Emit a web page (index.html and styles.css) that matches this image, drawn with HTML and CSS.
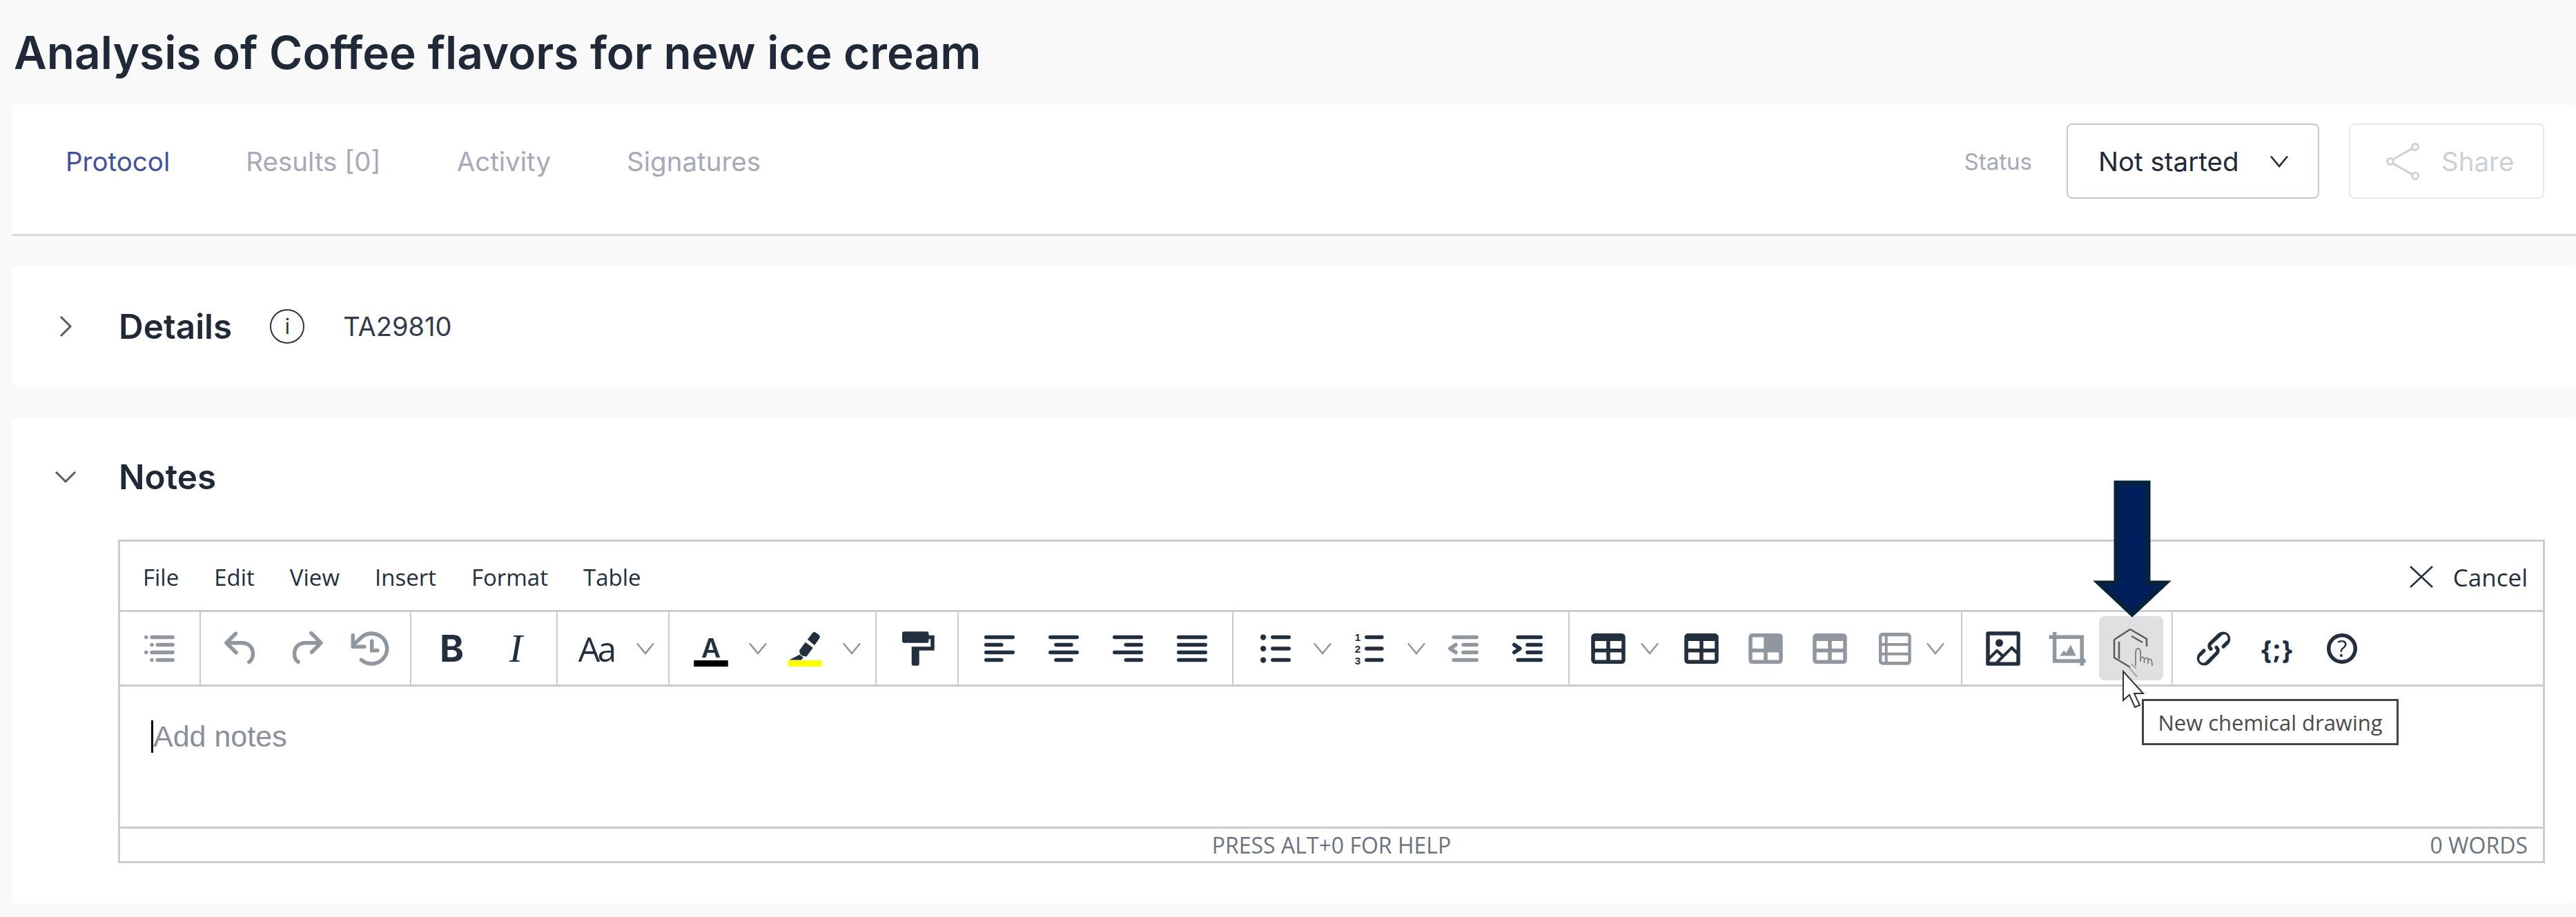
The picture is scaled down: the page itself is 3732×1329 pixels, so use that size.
FILE: index.html
```html
<!doctype html>
<html lang="en">
  <head>
    <meta charset="UTF-8" />
    <title>Analysis of Coffee flavors for new ice cream</title>
    <link rel="stylesheet" href="styles.css">
  </head>
  <body>
    <svg class="sprite">
      <symbol id="chev" viewBox="0 0 28 18"><path d="M2 1.500 14 16 26 1.500" fill="none" stroke="currentColor" stroke-width="2.600"/></symbol>
      <symbol id="table" viewBox="0 0 24 24"><path fill-rule="evenodd" d="M19 4a2 2 0 0 1 2 2v12a2 2 0 0 1-2 2H5a2 2 0 0 1-2-2V6c0-1.1.9-2 2-2h14ZM5 14v4h6v-4H5Zm14 0h-6v4h6v-4Zm0-6h-6v4h6V8ZM5 12h6V8H5v4Z"/></symbol>
    </svg>

    <h1 class="page-title">Analysis of Coffee flavors for new ice cream</h1>

    <div class="card tabs-card">
      <div class="tabs">
        <a class="tab active">Protocol</a>
        <a class="tab">Results [0]</a>
        <a class="tab">Activity</a>
        <a class="tab">Signatures</a>
      </div>
      <div class="tabs-right">
        <span class="status-label">Status</span>
        <div class="select">
          <span>Not started</span>
          <svg class="select-chev"><use href="#chev"/></svg>
        </div>
        <div class="share-btn">
          <svg class="share-icon" viewBox="0 0 50 54" fill="none" stroke="currentColor" stroke-width="3">
            <circle cx="6" cy="27" r="4.500"/><circle cx="42" cy="6" r="4.500"/><circle cx="42" cy="48" r="4.500"/>
            <path d="M10 24 38 8M10 30l28 16"/>
          </svg>
          <span>Share</span>
        </div>
      </div>
    </div>

    <div class="card details-card">
      <svg class="section-chev" viewBox="0 0 20 34"><path d="M3 3 17 17 3 31" fill="none" stroke="currentColor" stroke-width="3"/></svg>
      <span class="section-title">Details</span>
      <span class="info-icon">i</span>
      <span class="details-id">TA29810</span>
    </div>

    <div class="card notes-card">
      <div class="notes-head">
        <svg class="section-chev-down" viewBox="0 0 34 20"><path d="M3 3 17 17 31 3" fill="none" stroke="currentColor" stroke-width="3"/></svg>
        <span class="section-title">Notes</span>
      </div>

      <div class="editor">
        <div class="menubar">
          <span>File</span>
          <span>Edit</span>
          <span>View</span>
          <span>Insert</span>
          <span>Format</span>
          <span>Table</span>
          <div class="cancel">
            <svg class="cancel-x" viewBox="0 0 36 34"><path d="M2 2 34 32M34 2 2 32" fill="none" stroke="currentColor" stroke-width="2.500"/></svg>
            <span>Cancel</span>
          </div>
        </div>

        <div class="toolbar">
          <div class="group">
            <button class="btn off"><svg class="ico" viewBox="0 0 24 24"><path d="M5 5c.6 0 1 .4 1 1s-.4 1-1 1a1 1 0 1 1 0-2Zm3 0h11c.6 0 1 .4 1 1s-.4 1-1 1H8a1 1 0 1 1 0-2Zm-3 8c.6 0 1 .4 1 1s-.4 1-1 1a1 1 0 0 1 0-2Zm3 0h11c.6 0 1 .4 1 1s-.4 1-1 1H8a1 1 0 0 1 0-2Zm0-4c.6 0 1 .4 1 1s-.4 1-1 1a1 1 0 1 1 0-2Zm3 0h8c.6 0 1 .4 1 1s-.4 1-1 1h-8a1 1 0 0 1 0-2Zm-3 8c.6 0 1 .4 1 1s-.4 1-1 1a1 1 0 0 1 0-2Zm3 0h8c.6 0 1 .4 1 1s-.4 1-1 1h-8a1 1 0 0 1 0-2Z"/></svg></button>
          </div>

          <div class="group">
            <button class="btn off"><svg class="ico" viewBox="0 0 24 24"><path d="M6.4 8H12c3.7 0 6.2 2 6.8 5.1.6 2.7-.4 5.6-2.3 6.8a1 1 0 0 1-1-1.8c1.1-.6 1.8-2.7 1.4-4.6-.5-2.1-2.1-3.5-4.9-3.5H6.4l3.3 3.3a1 1 0 1 1-1.4 1.4l-5-5a1 1 0 0 1 0-1.4l5-5a1 1 0 0 1 1.4 1.4L6.4 8Z"/></svg></button>
            <button class="btn off"><svg class="ico" viewBox="0 0 24 24"><path d="M17.6 10H12c-2.8 0-4.4 1.4-4.9 3.5-.4 2 .3 4 1.4 4.6a1 1 0 1 1-1 1.8c-2-1.2-2.9-4.1-2.3-6.8.6-3 3-5.1 6.8-5.1h5.6l-3.3-3.3a1 1 0 1 1 1.4-1.4l5 5a1 1 0 0 1 0 1.4l-5 5a1 1 0 0 1-1.4-1.4l3.3-3.3Z"/></svg></button>
            <button class="btn off"><svg class="ico" viewBox="0 0 24 24"><path d="M17 13c0 .6-.4 1-1 1h-4V8c0-.6.4-1 1-1s1 .4 1 1v4h2c.6 0 1 .4 1 1Z"/><path d="M4.7 10H9a1 1 0 0 1 0 2H3a1 1 0 0 1-1-1V5a1 1 0 1 1 2 0v3l2.5-2.4a9.2 9.2 0 0 1 10.8-1.5A9 9 0 0 1 13.4 21c-2.4.1-4.7-.7-6.5-2.2a1 1 0 1 1 1.3-1.5 7.2 7.2 0 0 0 11.6-3.7 7 7 0 0 0-3.5-7.7A7.2 7.2 0 0 0 8 7L4.7 10Z"/></svg></button>
          </div>

          <div class="group">
            <button class="btn glyph-b">B</button>
            <button class="btn glyph-i">I</button>
          </div>

          <div class="group">
            <button class="btn glyph-aa">Aa</button>
            <span class="caret"><svg><use href="#chev"/></svg></span>
          </div>

          <div class="group">
            <button class="btn">
              <svg class="ico" viewBox="0 0 24 24">
                <text class="glyph-a" x="12" y="16.600" text-anchor="middle">A</text>
                <rect x="3" y="18.200" width="18" height="3.300" fill="#000"/>
              </svg>
            </button>
            <span class="caret"><svg><use href="#chev"/></svg></span>
            <button class="btn">
              <svg class="ico" viewBox="0 0 24 24">
                <path d="M13.400 7.200 16 3.800q.8-.9 1.800-.3l1.600 1.200q.9.8.3 1.800l-2.600 3.800ZM12.300 8.600l4 2.900-3.400 4.700-2-.3-1.400-1-.4-1.900ZM9.200 15.200l2 1.400-1 1.400H3.800Z"/>
                <rect x="3" y="18.200" width="18" height="3.300" fill="#ff0"/>
              </svg>
            </button>
            <span class="caret"><svg><use href="#chev"/></svg></span>
          </div>

          <div class="group">
            <button class="btn"><svg class="ico" viewBox="0 0 24 24"><path d="M18 5V4c0-.5-.4-1-1-1H5a1 1 0 0 0-1 1v4c0 .6.5 1 1 1h12c.6 0 1-.4 1-1V7h1v4H9v9c0 .6.4 1 1 1h2c.6 0 1-.4 1-1v-7h8V5h-3Z"/></svg></button>
          </div>

          <div class="group">
            <button class="btn"><svg class="ico" viewBox="0 0 24 24"><rect x="4" y="5" width="16" height="2" rx="1"/><rect x="4" y="9" width="10" height="2" rx="1"/><rect x="4" y="13" width="16" height="2" rx="1"/><rect x="4" y="17" width="10" height="2" rx="1"/></svg></button>
            <button class="btn"><svg class="ico" viewBox="0 0 24 24"><rect x="4" y="5" width="16" height="2" rx="1"/><rect x="7" y="9" width="10" height="2" rx="1"/><rect x="4" y="13" width="16" height="2" rx="1"/><rect x="7" y="17" width="10" height="2" rx="1"/></svg></button>
            <button class="btn"><svg class="ico" viewBox="0 0 24 24"><rect x="4" y="5" width="16" height="2" rx="1"/><rect x="10" y="9" width="10" height="2" rx="1"/><rect x="4" y="13" width="16" height="2" rx="1"/><rect x="10" y="17" width="10" height="2" rx="1"/></svg></button>
            <button class="btn"><svg class="ico" viewBox="0 0 24 24"><rect x="4" y="5" width="16" height="2" rx="1"/><rect x="4" y="9" width="16" height="2" rx="1"/><rect x="4" y="13" width="16" height="2" rx="1"/><rect x="4" y="17" width="16" height="2" rx="1"/></svg></button>
          </div>

          <div class="group">
            <button class="btn"><svg class="ico" viewBox="0 0 24 24"><circle cx="5.500" cy="6" r="1.500"/><circle cx="5.500" cy="12" r="1.500"/><circle cx="5.500" cy="18" r="1.500"/><rect x="9.500" y="5" width="10.500" height="2" rx="1"/><rect x="9.500" y="11" width="10.500" height="2" rx="1"/><rect x="9.500" y="17" width="10.500" height="2" rx="1"/></svg></button>
            <span class="caret"><svg><use href="#chev"/></svg></span>
            <button class="btn"><svg class="ico" viewBox="0 0 24 24"><text class="glyph-num" x="5.800" y="8">1</text><text class="glyph-num" x="5.800" y="14.200">2</text><text class="glyph-num" x="5.800" y="20.400">3</text><rect x="9.500" y="5" width="10" height="2" rx="1"/><rect x="9.500" y="11" width="10" height="2" rx="1"/><rect x="9.500" y="17" width="10" height="2" rx="1"/></svg></button>
            <span class="caret"><svg><use href="#chev"/></svg></span>
            <button class="btn off"><svg class="ico" viewBox="0 0 24 24"><path d="M7 5h12c.6 0 1 .4 1 1s-.4 1-1 1H7a1 1 0 1 1 0-2Zm5 4h7c.6 0 1 .4 1 1s-.4 1-1 1h-7a1 1 0 0 1 0-2Zm0 4h7c.6 0 1 .4 1 1s-.4 1-1 1h-7a1 1 0 0 1 0-2Zm-5 4h12a1 1 0 0 1 0 2H7a1 1 0 0 1 0-2Zm1.6-3.8a1 1 0 0 1-1.2 1.6l-3-2a1 1 0 0 1 0-1.6l3-2a1 1 0 0 1 1.2 1.6L6.8 12l1.8 1.2Z"/></svg></button>
            <button class="btn"><svg class="ico" viewBox="0 0 24 24"><path d="M7 5h12c.6 0 1 .4 1 1s-.4 1-1 1H7a1 1 0 1 1 0-2Zm5 4h7c.6 0 1 .4 1 1s-.4 1-1 1h-7a1 1 0 0 1 0-2Zm0 4h7c.6 0 1 .4 1 1s-.4 1-1 1h-7a1 1 0 0 1 0-2Zm-5 4h12a1 1 0 0 1 0 2H7a1 1 0 0 1 0-2Zm-2.6-3.8L6.2 12l-1.8-1.2a1 1 0 0 1 1.2-1.6l3 2a1 1 0 0 1 0 1.6l-3 2a1 1 0 1 1-1.2-1.6Z"/></svg></button>
          </div>

          <div class="group">
            <button class="btn"><svg class="ico"><use href="#table"/></svg></button>
            <span class="caret caret-tight"><svg><use href="#chev"/></svg></span>
            <button class="btn"><svg class="ico"><use href="#table"/></svg></button>
            <button class="btn off"><svg class="ico" viewBox="0 0 24 24"><path fill-rule="evenodd" d="M19 4a2 2 0 0 1 2 2v12a2 2 0 0 1-2 2H5a2 2 0 0 1-2-2V6c0-1.1.9-2 2-2h14ZM5 14v4h6v-4H5Zm14 0h-6v4h6v-4ZM11 6H5v6h6V6Z"/></svg></button>
            <button class="btn off"><svg class="ico"><use href="#table"/></svg></button>
            <button class="btn off"><svg class="ico" viewBox="0 0 24 24"><path fill-rule="evenodd" d="M19 3.600a2 2 0 0 1 2 2v13a2 2 0 0 1-2 2H6a2 2 0 0 1-2-2v-13c0-1.100.9-2 2-2h13ZM5.600 15.500v3.400h1.600v-3.400H5.600Zm3 0v3.400h10.800v-3.400H8.600Zm0-5v3.600h10.800v-3.600H8.600Zm-3 0v3.600h1.600v-3.600H5.600Zm3-5v3.600h10.800V5.500H8.600Zm-3 0v3.600h1.600V5.500H5.600Z"/></svg></button>
            <span class="caret caret-tight"><svg><use href="#chev"/></svg></span>
          </div>

          <div class="group">
            <button class="btn"><svg class="ico" viewBox="0 0 24 24"><path fill-rule="evenodd" d="m5 15.7 3.3-3.2c.3-.3.7-.3 1 0L12 15l4.1-4c.3-.4.8-.4 1 0l2 1.9V5H5v10.7ZM5 18v1h3l2.8-2.9-2-2L5 17.9Zm14-3-2.5-2.4-6.4 6.5H19v-4ZM4 3h16c.6 0 1 .4 1 1v16c0 .6-.4 1-1 1H4a1 1 0 0 1-1-1V4c0-.6.4-1 1-1Zm6 8a2 2 0 1 0 0-4 2 2 0 0 0 0 4Z"/></svg></button>
            <button class="btn off">
              <svg class="ico" viewBox="0 0 24 24">
                <path d="M5.300 3.300V18.500H21.700M2.400 5.900H19.700V21" fill="none" stroke="currentColor" stroke-width="2"/>
                <path d="M8 15.800 10.200 13l1.200 1.200 2.400-4.200 2.800 5.800Z"/>
              </svg>
            </button>
            <button class="btn hover">
              <svg class="chem" viewBox="0 0 93 93" fill="none">
                <path d="M45 19 69 33V44M22 34V60L45 74M22 34 45 19M47 29 63 38M29 37V62" stroke="#5c5c5c" stroke-width="2.500"/>
                <path d="M53 72V53q0-6 3.500-6T60 53V66M60 61q3-3 5.500 0V68M65.500 62q3-2.500 5.500 0V69M71 63q3-2 5 1 1 5 1 8" stroke="#858585" stroke-width="2"/>
                <path d="M47 69 54 76M44 75 55 88" stroke="#a5a5a5" stroke-width="2"/>
              </svg>
            </button>
          </div>

          <div class="group">
            <button class="btn"><svg class="ico" viewBox="0 0 24 24"><path d="M6.2 12.3a1 1 0 0 1 1.4 1.4l-2 2a2 2 0 1 0 2.6 2.8l4.8-4.8a1 1 0 0 0 0-1.4 1 1 0 1 1 1.400-1.300 2.900 2.900 0 0 1 0 4L9.600 20a3.900 3.900 0 0 1-5.500-5.500l2-2Zm11.600-.6a1 1 0 0 1-1.400-1.400l2-2a2 2 0 1 0-2.600-2.800L11 9.900a1 1 0 0 0 0 1.400 1 1 0 1 1-1.400 1.300 2.900 2.900 0 0 1 0-4L14.400 4a3.900 3.900 0 0 1 5.500 5.500l-2 2Z"/></svg></button>
            <button class="btn glyph-code">{;}</button>
            <button class="btn">
              <svg class="ico" viewBox="0 0 24 24">
                <circle cx="12" cy="12" r="7" fill="none" stroke="currentColor" stroke-width="2"/>
                <text class="glyph-help" x="12" y="16.200" text-anchor="middle">?</text>
              </svg>
            </button>
          </div>
        </div>

        <div class="edit-area">
          <span class="caret-line"></span><span class="placeholder">Add notes</span>
        </div>

        <div class="statusbar">
          <span></span>
          <span class="help-hint">PRESS ALT+0 FOR HELP</span>
          <span class="word-count">0 WORDS</span>
        </div>
      </div>
    </div>

    <svg class="big-arrow" viewBox="0 0 118 210"><path d="M36 6H82V151H107L59 196 11 151H36Z" fill="#001f5c" stroke="#05233a" stroke-width="7" stroke-miterlimit="10"/></svg>
    <svg class="mouse" viewBox="0 0 34 58"><path d="M2 2V44L11 36 19 54 26 51 18 34H31Z" fill="#fff" stroke="#333" stroke-width="2"/></svg>
    <div class="tooltip">New chemical drawing</div>
  </body>
</html>
```

FILE: styles.css
```css
* {
  box-sizing: border-box;
}
body {
  font-family: "Inter", "Liberation Sans", sans-serif;
  margin: 0;
  padding-left: 18px;
  background-color: #f9f9f9;
  color: #222f3e;
  height: 1329px;
  overflow: hidden;
}
.sprite {
  display: none;
}
.page-title {
  margin: 0;
  height: 151px;
  padding: 37px 0 0 2px;
  font-size: 65.700px;
  line-height: 78px;
  font-weight: 600;
  color: #1f2937;
}
.card {
  background-color: white;
  border-radius: 8px;
}

/* tabs */
.tabs-card {
  height: 191px;
  display: flex;
  justify-content: space-between;
  align-items: center;
  padding: 0 46px 23px 77px;
  border-bottom: 3px solid #d5d8e2;
  border-radius: 8px 8px 0 0;
  margin-bottom: 43px;
}
.tabs {
  display: flex;
  gap: 110px;
}
.tab {
  font-size: 38.500px;
  color: #a5a9b8;
}
.tab.active {
  color: #3f51a0;
}
.tabs-right {
  display: flex;
  align-items: center;
}
.status-label {
  font-size: 33px;
  color: #a5a9b5;
  margin-right: 50px;
}
.select {
  width: 366px;
  height: 109px;
  border: 2px solid #c5c8d2;
  border-radius: 8px;
  display: flex;
  align-items: center;
  justify-content: space-between;
  padding: 0 42px 0 44px;
  font-size: 38.500px;
  color: #1f2937;
}
.select-chev {
  width: 28px;
  height: 18px;
}
.share-btn {
  width: 283px;
  height: 109px;
  margin-left: 43px;
  border: 2px solid #e6e8ee;
  border-radius: 8px;
  display: flex;
  align-items: center;
  padding-left: 52px;
  gap: 30px;
  font-size: 38.500px;
  color: #cdd0d9;
}
.share-icon {
  width: 50px;
  height: 54px;
}

/* section headers */
.details-card {
  height: 176px;
  margin-bottom: 44px;
  display: flex;
  align-items: center;
  padding-left: 67px;
}
.section-chev {
  width: 20px;
  height: 34px;
  color: #555d6b;
  margin-right: 67px;
}
.section-chev-down {
  width: 34px;
  height: 20px;
  color: #555d6b;
  margin: 0 60px;
}
.section-title {
  font-size: 49.500px;
  font-weight: 600;
  color: #1f2937;
}
.info-icon {
  width: 50px;
  height: 50px;
  margin: 0 56px 0 55px;
  border: 2px solid #333;
  border-radius: 50%;
  display: flex;
  align-items: center;
  justify-content: center;
  font-size: 30px;
  color: #333;
}
.details-id {
  font-size: 38px;
  color: #333c4a;
}
.notes-card {
  height: 704px;
}
.notes-head {
  height: 177px;
  display: flex;
  align-items: center;
  padding-bottom: 6px;
}

/* editor */
.editor {
  margin-left: 153px;
  width: 3516px;
  border: 3px solid #cccccc;
  font-family: "Open Sans", sans-serif;
}
.menubar {
  height: 102px;
  display: flex;
  align-items: center;
  gap: 51px;
  padding: 3px 22px 0 33px;
  border-bottom: 3px solid #cccccc;
  font-size: 33px;
  color: #222f3e;
}
.cancel {
  margin-left: auto;
  display: flex;
  align-items: center;
  gap: 28px;
  font-size: 35px;
}
.cancel-x {
  width: 36px;
  height: 34px;
}
.toolbar {
  height: 108px;
  display: flex;
  align-items: center;
  border-bottom: 3px solid #cccccc;
}
.group {
  height: 100%;
  display: flex;
  align-items: center;
  padding: 0 12px;
  border-right: 2px solid #cccccc;
}
.group:first-child {
  padding-left: 10px;
}
.group:nth-child(5) {
  padding: 0 13px;
}
.group:nth-child(8) {
  padding: 0 13px 0 14px;
}
.group:nth-child(9) {
  padding: 0 9px;
}
.group:last-child {
  border-right: none;
}
.btn {
  width: 93px;
  height: 93px;
  padding: 0;
  border: none;
  border-radius: 8px;
  background: none;
  display: flex;
  align-items: center;
  justify-content: center;
  color: #222f3e;
}
.btn.off {
  color: #90979f;
}
.btn.hover {
  background-color: #dee0e2;
}
.ico {
  width: 66px;
  height: 66px;
  fill: currentColor;
}
.chem {
  width: 93px;
  height: 93px;
}
.caret {
  width: 43px;
  display: flex;
  justify-content: center;
  color: #90979f;
}
.caret svg {
  width: 28px;
  height: 18px;
}
.caret-tight {
  width: 42px;
  justify-content: flex-start;
}
.glyph-b {
  font-family: "Inter", sans-serif;
  font-size: 53px;
  font-weight: 700;
}
.glyph-i {
  font-family: "Liberation Serif", serif;
  font-size: 58px;
  font-style: italic;
}
.glyph-aa {
  font-family: "Open Sans", sans-serif;
  font-size: 50px;
  letter-spacing: -4px;
  padding-right: 6px;
}
.glyph-code {
  font-family: "Open Sans", sans-serif;
  font-size: 38px;
  font-weight: 700;
  letter-spacing: 2px;
}
.glyph-a {
  font-family: "Inter", sans-serif;
  font-size: 14px;
  font-weight: 600;
}
.glyph-num {
  font-family: "Liberation Sans", sans-serif;
  font-size: 5.500px;
  font-weight: 700;
  text-anchor: middle;
}
.glyph-help {
  font-family: "Open Sans", sans-serif;
  font-size: 12px;
}
.edit-area {
  height: 206px;
  padding: 49px 0 0 45px;
  display: flex;
  align-items: flex-start;
  border-bottom: 3px solid #cccccc;
}
.caret-line {
  width: 3px;
  height: 47px;
  background-color: #000;
}
.placeholder {
  font-family: "Liberation Sans", sans-serif;
  font-size: 43px;
  line-height: 47px;
  color: #8a9099;
}
.statusbar {
  height: 47px;
  display: grid;
  grid-template-columns: 1fr auto 1fr;
  align-items: center;
  padding: 0 22px;
  font-size: 32px;
  color: #6b7280;
}
.word-count {
  text-align: right;
}

/* overlays */
.big-arrow {
  position: absolute;
  left: 3030px;
  top: 694px;
  width: 118px;
  height: 210px;
}
.mouse {
  position: absolute;
  left: 3074px;
  top: 971px;
  width: 34px;
  height: 58px;
}
.tooltip {
  position: absolute;
  left: 3103px;
  top: 1013px;
  width: 372px;
  height: 67px;
  border: 3px solid #444;
  background-color: white;
  display: flex;
  align-items: center;
  justify-content: center;
  font-family: "Open Sans", sans-serif;
  font-size: 31px;
  color: #4a4a4a;
}
```
